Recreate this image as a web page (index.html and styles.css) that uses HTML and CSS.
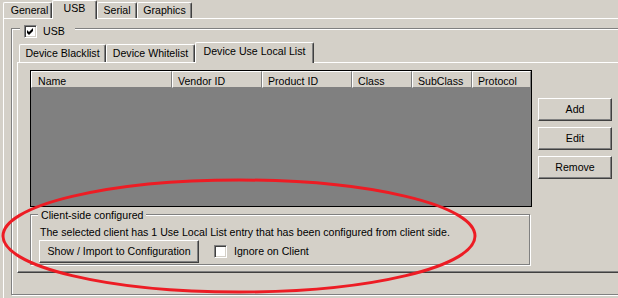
FILE: index.html
```html
<!DOCTYPE html>
<html>
<head>
<meta charset="utf-8">
<link rel="stylesheet" href="styles.css">
</head>
<body>
<div class="tabs tabs-main">
  <div class="tab t-general">General</div>
  <div class="tab selected t-usb">USB</div>
  <div class="tab t-serial">Serial</div>
  <div class="tab t-graphics">Graphics</div>
</div>
<div class="panel-main">
  <div class="group group-usb">
    <div class="group-label label-usb">
      <span class="checkbox"><svg width="11" height="11" viewBox="0 0 11 11"><polygon points="2,4 4,6 8,2 8,5 4,9 2,7" fill="#000"/></svg></span>
      <span class="label-text">USB</span>
    </div>
    <div class="tabs tabs-sub">
      <div class="tab sub t-black">Device Blacklist</div>
      <div class="tab sub t-white">Device Whitelist</div>
      <div class="tab sub selected t-local">Device Use Local List</div>
    </div>
    <div class="panel-sub">
      <div class="content-row">
        <div class="listview">
          <div class="lv-header">
            <div class="col c-name">Name</div>
            <div class="col c-vendor">Vendor ID</div>
            <div class="col c-product">Product ID</div>
            <div class="col c-class">Class</div>
            <div class="col c-subclass">SubClass</div>
            <div class="col c-protocol">Protocol</div>
          </div>
        </div>
        <div class="buttons">
          <button class="btn">Add</button>
          <button class="btn">Edit</button>
          <button class="btn">Remove</button>
        </div>
      </div>
      <div class="group group-client">
        <div class="group-label label-client">Client-side configured</div>
        <div class="desc">The selected client has 1 Use Local List entry that has been configured from client side.</div>
        <div class="client-row">
          <button class="btn btn-wide">Show / Import to Configuration</button>
          <span class="checkbox cb-ignore"></span>
          <span class="cb-text">Ignore on Client</span>
        </div>
      </div>
    </div>
  </div>
</div>
<svg class="annotation" width="618" height="298" viewBox="0 0 618 298">
  <ellipse cx="239" cy="236" rx="236" ry="56" fill="none" stroke="#ed1c24" stroke-width="3"/>
</svg>
</body>
</html>
```
FILE: styles.css
```css
body {
  margin: 0;
  width: 618px;
  height: 298px;
  overflow: hidden;
  position: relative;
  background: #d4d0c8;
  color: #000;
  font-family: "Liberation Sans", Arial, sans-serif;
  font-size: 10.6px;
  line-height: 13px;
}

.tabs {
  display: flex;
  align-items: flex-end;
}

.tabs-main {
  height: 18px;
  padding-left: 3px;
}

.tab {
  box-sizing: border-box;
  height: 16px;
  padding-top: 1px;
  border-top: 1px solid #fff;
  border-left: 1px solid #fff;
  border-right: 1px solid #404040;
  border-top-left-radius: 2px;
  border-top-right-radius: 2px;
  box-shadow: inset -1px 0 #808080;
  background: #d4d0c8;
  text-align: center;
  white-space: nowrap;
}

.tab.selected {
  height: 19px;
  margin-bottom: -1px;
  position: relative;
  z-index: 1;
}

.t-general { width: 49px; padding-left: 4px; }
.t-usb { width: 45px; }
.t-serial { width: 40px; }
.t-graphics { width: 55px; }

.panel-main {
  margin-left: 3px;
  border-top: 1px solid #fff;
  border-left: 1px solid #fff;
  padding: 9px 0 0 7px;
  height: 400px;
}

.group {
  box-sizing: border-box;
  border: 1px solid #808080;
  box-shadow: inset 1px 1px #fff, 1px 1px #fff;
}

.group-usb {
  width: 700px;
  padding-bottom: 21px;
}

.group-label {
  display: flex;
  align-items: center;
  width: fit-content;
  background: #d4d0c8;
  height: 13px;
  white-space: nowrap;
}

.label-usb {
  margin: -4px 0 0 8px;
  padding: 0 10px 0 4px;
}

.label-text {
  margin-left: 6px;
}

.checkbox {
  box-sizing: border-box;
  display: flex;
  align-items: center;
  justify-content: center;
  width: 13px;
  height: 13px;
  flex: none;
  background: #fff;
  border: 1px solid;
  border-color: #808080 #fff #fff #808080;
  box-shadow: inset 1px 1px #404040, inset -1px -1px #d4d0c8;
}

.checkbox svg {
  display: block;
}

.tabs-sub {
  height: 20px;
  margin: 4px 0 0 5px;
  padding-left: 2px;
}

.tab.sub {
  height: 18px;
  padding-top: 2px;
}

.tab.sub.selected {
  height: 21px;
}

.t-black { width: 87px; }
.t-white { width: 89px; }
.t-local { width: 119px; }

.panel-sub {
  margin-left: 5px;
  border-top: 1px solid #fff;
  border-left: 1px solid #fff;
  border-bottom: 1px solid #404040;
  box-shadow: inset 0 -1px #808080;
  padding: 7px 0 7px 12px;
}

.content-row {
  display: flex;
}

.listview {
  box-sizing: border-box;
  width: 502px;
  height: 137px;
  border: 1px solid #000;
  background: #808080;
}

.lv-header {
  display: flex;
  height: 17px;
  background: #d4d0c8;
}

.col {
  box-sizing: border-box;
  height: 17px;
  padding: 3px 0 0 5px;
  border: 1px solid;
  border-color: #fff #808080 #808080 #fff;
  white-space: nowrap;
  overflow: hidden;
}

.c-name { width: 141px; padding-left: 6px; }
.c-vendor { width: 90px; }
.c-product { width: 90px; }
.c-class { width: 60px; }
.c-subclass { width: 60px; }
.c-protocol { width: 59px; }

.buttons {
  display: flex;
  flex-direction: column;
  gap: 6px;
  margin-left: 6px;
  padding-top: 28px;
}

.btn {
  box-sizing: border-box;
  width: 74px;
  height: 23px;
  padding: 0;
  margin: 0;
  border: 1px solid;
  border-color: #fff #404040 #404040 #fff;
  box-shadow: inset -1px -1px #808080;
  background: #d4d0c8;
  color: #000;
  font-family: "Liberation Sans", Arial, sans-serif;
  font-size: 10.6px;
  line-height: 13px;
  text-align: center;
}

.btn-wide {
  width: 160px;
}

.group-client {
  width: 500px;
  height: 51px;
  margin-top: 7px;
  padding-left: 8px;
}

.label-client {
  margin: -6px 0 0 -1px;
  padding: 0 3px;
}

.desc {
  margin: 4px 0 0 1px;
  white-space: nowrap;
}

.client-row {
  display: flex;
  align-items: center;
  margin-top: 1px;
}

.cb-ignore {
  margin-left: 15px;
}

.cb-text {
  margin-left: 7px;
}

.annotation {
  position: absolute;
  left: 0;
  top: 0;
  pointer-events: none;
}
```
